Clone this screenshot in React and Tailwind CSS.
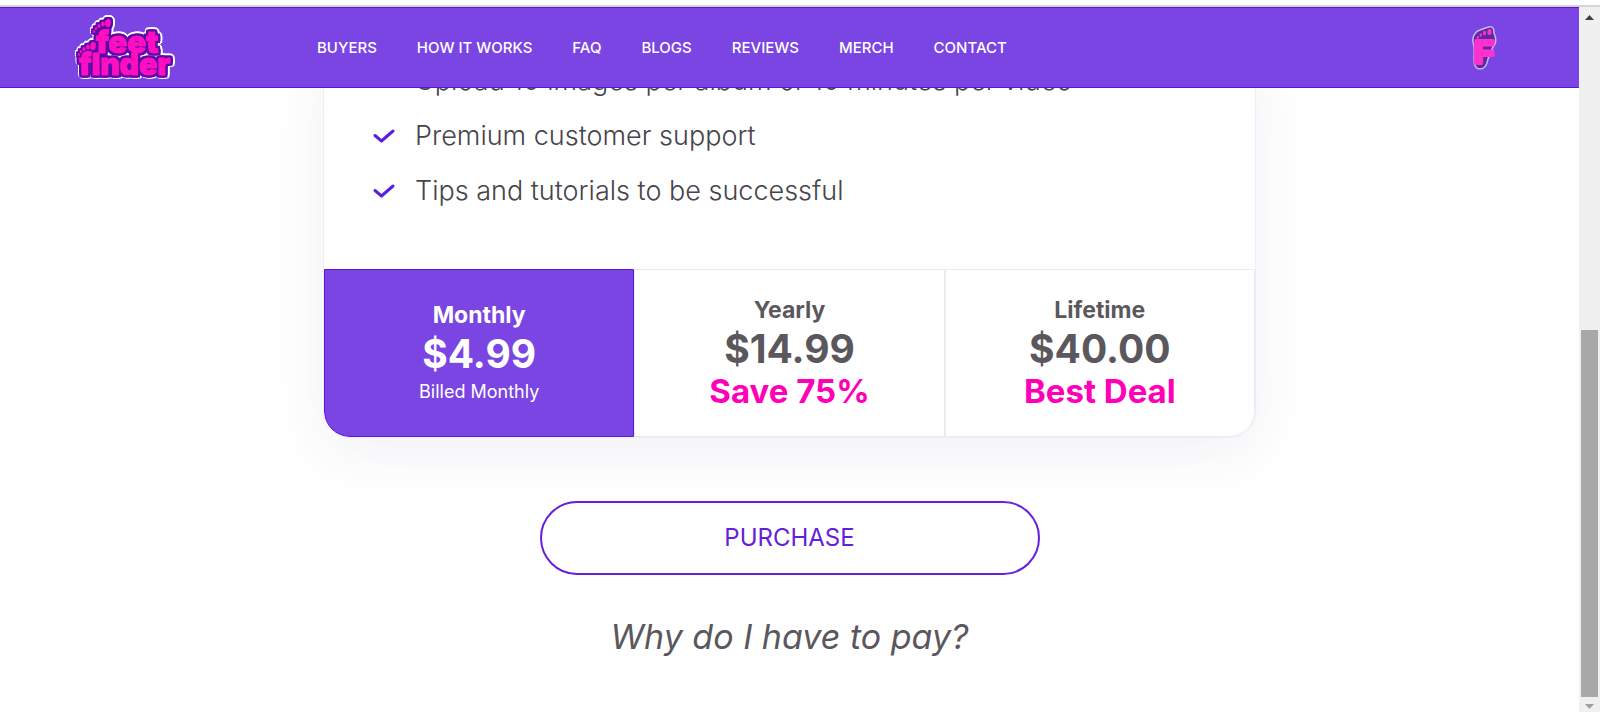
const NAV_LINKS = [
  "Buyers",
  "How it works",
  "FAQ",
  "Blogs",
  "Reviews",
  "Merch",
  "Contact",
];

const FEATURES = [
  "Upload 10 images per album or 10 minutes per video",
  "Premium customer support",
  "Tips and tutorials to be successful",
];

const PLANS = [
  { name: "Monthly", price: "$4.99", note: "Billed Monthly" },
  { name: "Yearly", price: "$14.99", deal: "Save 75%" },
  { name: "Lifetime", price: "$40.00", deal: "Best Deal" },
];

function Toes(props) {
  return (
    <g transform={props.transform}>
      <ellipse cx="15" cy="4" rx="2.8" ry="4" transform="rotate(8 15 4)" />
      <ellipse cx="10" cy="5" rx="1.9" ry="2.6" />
      <ellipse cx="6" cy="7" rx="1.5" ry="2" />
      <ellipse cx="3" cy="9.5" rx="1.3" ry="1.6" />
      <ellipse cx="1" cy="12.500" rx="1.1" ry="1.3" />
    </g>
  );
}

// the purple and white outlines are stacked drop shadows round the pink shapes
function Logo() {
  return (
    <svg
      className="h-[70px] w-[106px] overflow-visible font-['Inter',sans-serif] font-black [filter:drop-shadow(2px_0_0_#5b0aa8)_drop-shadow(-2px_0_0_#5b0aa8)_drop-shadow(0_2px_0_#5b0aa8)_drop-shadow(0_-2px_0_#5b0aa8)_drop-shadow(1px_1px_0_#fff)_drop-shadow(-1px_-1px_0_#fff)_drop-shadow(1px_-1px_0_#fff)]"
      viewBox="0 0 106 70"
      strokeLinejoin="round"
      fill="#ff0fc0"
      aria-label="Feet Finder"
    >
      <g stroke="#ff0fc0" strokeWidth="1">
        <text x="22" y="40" fontSize="31">
          feet
        </text>
        <text x="5" y="62" fontSize="30">
          fInder
        </text>
      </g>
      <Toes transform="translate(19 6)" />
      <Toes transform="translate(4 29)" />
    </svg>
  );
}

function FootIcon() {
  return (
    <svg
      className="h-12 w-[26px] font-['Liberation_Sans',sans-serif] font-bold"
      viewBox="0 -2 26 48"
      strokeLinejoin="round"
    >
      <path
        d="M18 1c4-1 5 2 5 6 1 3 3 6 1 11-1 2-3 3-3 6 1 4-3 5-4 9-1 6-3 10-8 10s-6-5-6-10c0-7 1-12-1-17C1 10 5 5 9 4c3-1 5-2 9-3z"
        fill="#5b2a9c"
        stroke="#c9b8f0"
        strokeWidth="1.500"
      />
      <g fill="#ff2fd0">
        <ellipse cx="18.500" cy="6" rx="2.200" ry="3" />
        <ellipse cx="13.500" cy="7" rx="1.600" ry="2.200" />
        <ellipse cx="9.800" cy="9" rx="1.300" ry="1.700" />
        <ellipse cx="6.800" cy="11.500" rx="1.100" ry="1.400" />
        <ellipse cx="4.800" cy="14.500" rx="1" ry="1.200" />
      </g>
      <text
        x="3"
        y="37"
        fontSize="32"
        fill="#ff2fd0"
        stroke="#ff2fd0"
        strokeWidth="4"
      >
        F
      </text>
    </svg>
  );
}

function Header() {
  return (
    <header className="relative z-10 flex h-[81px] shrink-0 items-center border-y border-[#5f14d8] bg-[#7a45e3] pr-[82px] pl-[74px]">
      <a href="#home">
        <Logo />
      </a>
      <nav className="ml-[137px] flex gap-10">
        {NAV_LINKS.map((link) => (
          <a
            key={link}
            href="#nav"
            className="text-[15px] leading-6 font-medium text-white uppercase"
          >
            {link}
          </a>
        ))}
      </nav>
      <button className="ml-auto" aria-label="Account">
        <FootIcon />
      </button>
    </header>
  );
}

function Feature(props) {
  return (
    <li className="flex h-[55px] items-center gap-5 text-[27px] font-light text-[#47444b]">
      <svg
        className="h-4 w-[22px]"
        viewBox="0 0 22 16"
        fill="none"
        stroke="#5a1fe0"
        strokeWidth="3"
        strokeLinecap="round"
        strokeLinejoin="round"
      >
        <path d="M2 6.500l6.500 5.500L20 2" />
      </svg>
      {props.children}
    </li>
  );
}

function Plan(props) {
  const { name, price, note, deal } = props.plan;
  return (
    <button
      className={
        note
          ? "flex h-[168px] flex-col items-center justify-center border border-[#5f14d8] bg-[#7a45e3] text-white first:rounded-bl-[26px]"
          : "flex h-[168px] flex-col items-center justify-center border border-[#eaeaf0] text-[#5a575d] last:rounded-br-[26px]"
      }
    >
      <span className="text-[23px] leading-[33px] font-bold">{name}</span>
      <span className="text-[39px] leading-[43px] font-bold">{price}</span>
      {note && <span className="text-lg leading-[33px]">{note}</span>}
      {deal && (
        <span className="text-[33px] leading-[43px] font-bold text-[#ff00b8]">
          {deal}
        </span>
      )}
    </button>
  );
}

function Scrollbar() {
  return (
    <div className="flex w-[21px] shrink-0 flex-col bg-[#f0f0f0] px-0.5">
      <svg className="h-[18px] shrink-0" viewBox="0 0 17 18">
        <path d="M4 13h9L8.500 8z" fill="#404040" />
      </svg>
      <div className="flex-[5]" />
      <div className="flex-[6] bg-[#a8a8a8]" />
      <svg className="h-[15px] shrink-0" viewBox="0 0 17 15">
        <path d="M4 7h9l-4.500 5z" fill="#a0a0a0" />
      </svg>
    </div>
  );
}

export default function App() {
  return (
    <div className="flex h-screen flex-col overflow-hidden bg-white font-['Inter',sans-serif]">
      <div className="h-[7px] shrink-0 border-b-2 border-[#d4d4d8]" />
      <div className="flex min-h-0 flex-1">
        <div className="flex min-w-0 flex-1 flex-col overflow-hidden">
          <Header />
          <main className="flex flex-col items-center">
            <section className="-mt-[35px] w-full max-w-[933px] overflow-hidden rounded-b-[26px] border border-[#eeeef4] shadow-[0_14px_60px_rgba(60,50,110,0.07)]">
              <ul className="pb-[50px] pl-[49px]">
                {FEATURES.map((feature) => (
                  <Feature key={feature}>{feature}</Feature>
                ))}
              </ul>
              <div className="grid grid-cols-3">
                {PLANS.map((plan) => (
                  <Plan key={plan.name} plan={plan} />
                ))}
              </div>
            </section>
            <button className="mt-[63px] h-[74px] w-full max-w-[500px] rounded-full border-2 border-[#6420dc] text-2xl text-[#6420dc]">
              PURCHASE
            </button>
            <p className="mt-[38px] text-[34px] leading-[48px] text-[#5a575d] italic">
              Why do I have to pay?
            </p>
          </main>
        </div>
        <Scrollbar />
      </div>
    </div>
  );
}
